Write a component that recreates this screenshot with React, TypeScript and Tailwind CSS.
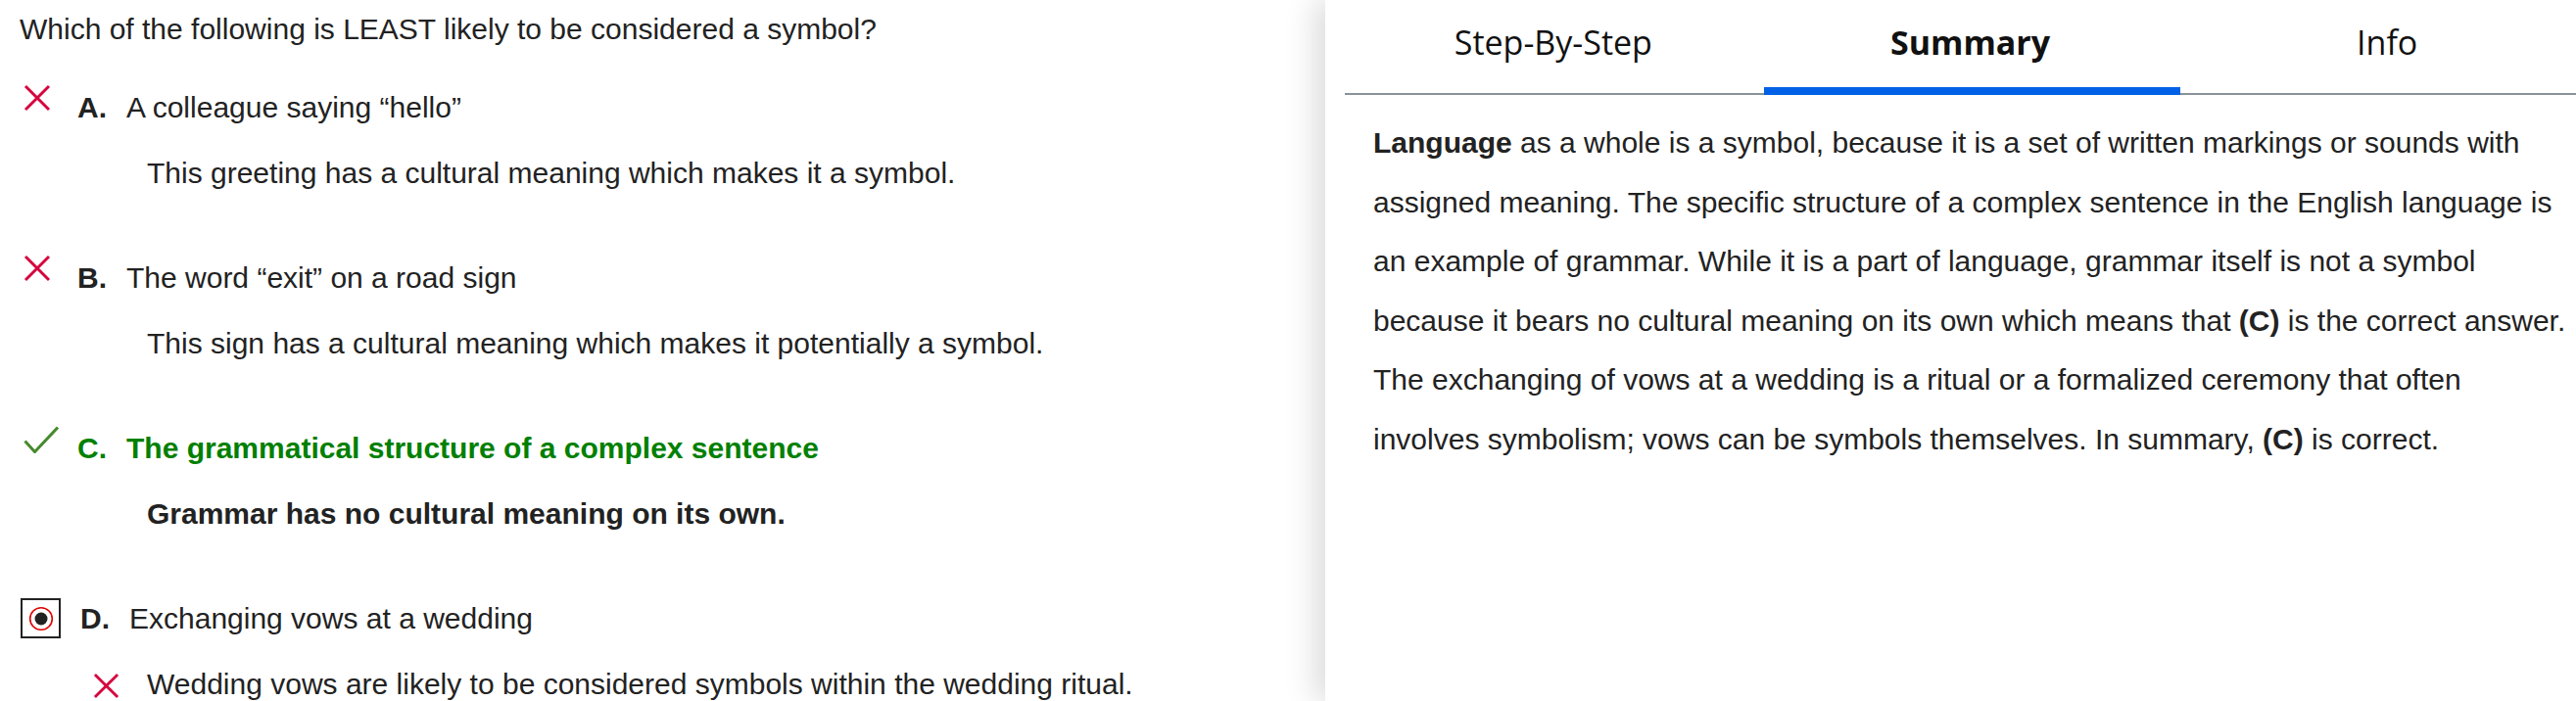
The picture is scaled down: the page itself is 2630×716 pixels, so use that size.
import React from "react";

const XIcon = ({ size = 28 }: { size?: number }) => (
  <svg width={size} height={size} viewBox="0 0 28 28" className="block">
    <path d="M2 2 L26 26 M26 2 L2 26" stroke="#d5063d" strokeWidth="3" fill="none" />
  </svg>
);

const CheckIcon = () => (
  <svg width="36" height="28" viewBox="0 0 36 28" className="block">
    <path d="M1.5 15.5 L11.5 26.5 L35 1.5" stroke="#468a2f" strokeWidth="3" fill="none" />
  </svg>
);

const RadioIcon = () => (
  <div className="w-[41px] h-[41px] border-2 border-[#222222] flex items-center justify-center">
    <svg width="26" height="26" viewBox="0 0 26 26" className="block">
      <circle cx="13" cy="13" r="11.3" stroke="#e00000" strokeWidth="1.6" fill="none" />
      <circle cx="13" cy="13" r="6.5" fill="#222222" />
    </svg>
  </div>
);

type Opt = {
  icon: "x" | "check" | "radio";
  letter: string;
  text: string;
  expl: string;
  correct?: boolean;
  explIcon?: boolean;
};

const options: Opt[] = [
  {
    icon: "x",
    letter: "A",
    text: "A colleague saying \u201chello\u201d",
    expl: "This greeting has a cultural meaning which makes it a symbol.",
  },
  {
    icon: "x",
    letter: "B",
    text: "The word \u201cexit\u201d on a road sign",
    expl: "This sign has a cultural meaning which makes it potentially a symbol.",
  },
  {
    icon: "check",
    letter: "C",
    text: "The grammatical structure of a complex sentence",
    expl: "Grammar has no cultural meaning on its own.",
    correct: true,
  },
  {
    icon: "radio",
    letter: "D",
    text: "Exchanging vows at a wedding",
    expl: "Wedding vows are likely to be considered symbols within the wedding ritual.",
    explIcon: true,
  },
];

function OptionIcon({ kind }: { kind: Opt["icon"] }) {
  if (kind === "x")
    return (
      <div className="w-[59px] shrink-0">
        <div className="ml-[4px] mt-[-7px]">
          <XIcon />
        </div>
      </div>
    );
  if (kind === "check")
    return (
      <div className="w-[59px] shrink-0">
        <div className="ml-[4px] mt-[-6px]">
          <CheckIcon />
        </div>
      </div>
    );
  return (
    <div className="w-[62px] shrink-0">
      <div className="ml-[1px] mt-[-4px]">
        <RadioIcon />
      </div>
    </div>
  );
}

function Option({ o }: { o: Opt }) {
  const tone = o.correct ? "text-[#008000]" : "text-[#222222]";
  return (
    <div className="mb-[73px]">
      <div className="flex items-start h-[34px] pl-[20px]">
        <OptionIcon kind={o.icon} />
        <span className={`w-[50px] shrink-0 font-bold ${tone}`}>{o.letter}.</span>
        <span className={o.correct ? "font-bold text-[#008000]" : "text-[#222222]"}>{o.text}</span>
      </div>
      <div className="flex items-start h-[34px] mt-[33px] pl-[95px]">
        <div className="w-[55px] shrink-0">
          {o.explIcon && (
            <div className="mt-[5px]">
              <XIcon size={27} />
            </div>
          )}
        </div>
        <span className={o.correct ? "font-bold text-[#222222]" : "text-[#222222]"}>{o.expl}</span>
      </div>
    </div>
  );
}

const summaryLines: React.ReactNode[] = [
  <>
    <b>Language</b>
    <span> as a whole is a symbol, because it is a set of written markings or sounds with</span>
  </>,
  <span>assigned meaning. The specific structure of a complex sentence in the English language is</span>,
  <span>an example of grammar. While it is a part of language, grammar itself is not a symbol</span>,
  <>
    <span>because it bears no cultural meaning on its own which means that </span>
    <b>(C)</b>
    <span> is the correct answer.</span>
  </>,
  <span>The exchanging of vows at a wedding is a ritual or a formalized ceremony that often</span>,
  <>
    <span>involves symbolism; vows can be symbols themselves. In summary, </span>
    <b>(C)</b>
    <span> is correct.</span>
  </>,
];

export default function App() {
  return (
    <div className="w-[2630px] h-[716px] overflow-hidden flex bg-white">
      <div
        className="w-[1353px] shrink-0 h-full pt-[13px] text-[30px] leading-[34px] text-[#222222]"
        style={{ fontFamily: '"Liberation Sans", Arial, sans-serif' }}
      >
        <div className="pl-[20px] h-[34px]">Which of the following is LEAST likely to be considered a symbol?</div>
        <div className="mt-[46px]">
          {options.map((o) => (
            <Option key={o.letter} o={o} />
          ))}
        </div>
      </div>
      <div className="w-[1317px] shrink-0 h-full bg-white relative z-10 shadow-[-12px_0_28px_rgba(0,0,0,0.13)] pl-[20px]">
        <div
          className="flex w-[1277px] h-[97px] border-b-2 border-[#8a9299] text-[34px] leading-[46px] text-[#111111]"
          style={{ fontFamily: '"Open Sans", sans-serif' }}
        >
          <div className="flex-1 text-center pt-[20px]">Step-By-Step</div>
          <div className="flex-1 text-center pt-[20px] font-bold relative">
            Summary
            <div className="absolute left-[2px] right-[-2px] bottom-[-2px] h-[8px] bg-[#0061e6]" />
          </div>
          <div className="flex-1 text-center pt-[20px]">Info</div>
        </div>
        <div
          className="pl-[29px] pt-[19px] text-[30px] leading-[60.5px] text-[#222222]"
          style={{ fontFamily: '"Liberation Sans", Arial, sans-serif' }}
        >
          {summaryLines.map((line, i) => (
            <div key={i} className="whitespace-nowrap">
              {line}
            </div>
          ))}
        </div>
      </div>
    </div>
  );
}
